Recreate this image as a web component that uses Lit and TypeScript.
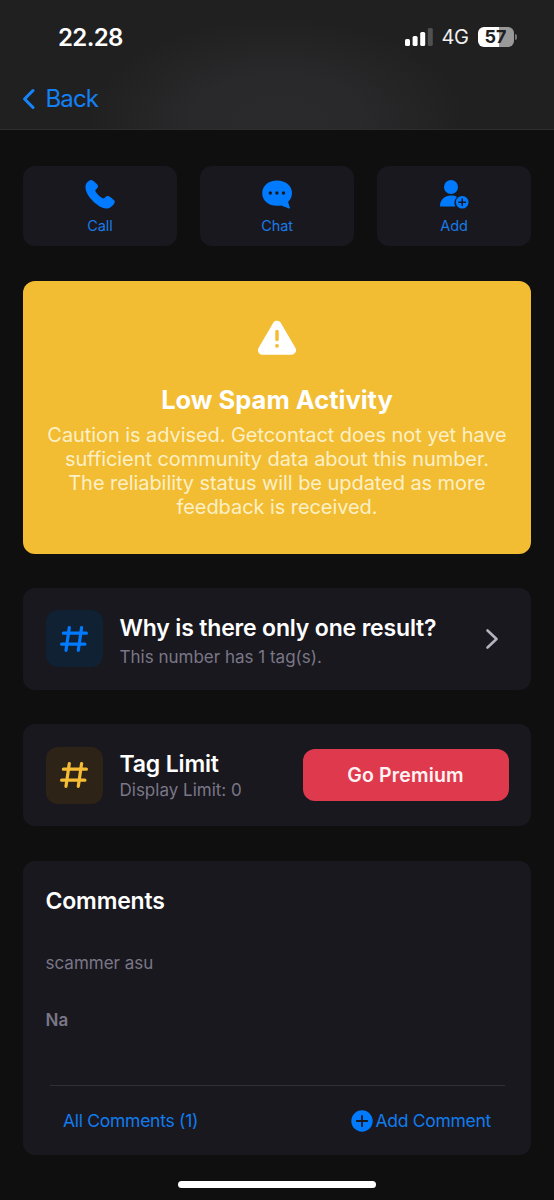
import { LitElement, html, css, svg } from "lit";
import { customElement, property } from "lit/decorators.js";

const base = css`
  * { box-sizing: border-box; }
  :host { display: block; }
  svg { display: block; flex: none; }
`;

const hash = svg`<path d="M9.300 2.500 6 25.300M21.600 2.500 18.300 25.300M3.400 8.200H26.400M1.600 19.200H24.900" fill="none" stroke="currentColor" stroke-width="3.200" stroke-linecap="round"/>`;

@customElement("status-header")
class StatusHeader extends LitElement {
  static styles = [base, css`
    :host {
      height: 130px;
      border-bottom: 1px solid #2d2d2e;
      background:
        radial-gradient(ellipse 190px 105px at 50% 95%, #2a2a2c 0%, #29292b 45%, rgba(32, 32, 32, 0) 100%),
        #202020;
    }
    .status { display: flex; align-items: center; height: 74px; padding-left: 58px; padding-right: 40.500px; }
    .time { flex: 1; font-size: 24px; font-weight: 600; letter-spacing: -0.600px; color: #fff; }
    .signal { margin-right: 8.500px; }
    .net { font-size: 20px; color: #f0f0f0; margin-right: 9px; letter-spacing: -0.400px; }
    .battery {
      position: relative; width: 36px; height: 20px; border-radius: 6px;
      background: linear-gradient(90deg, #fff 0 57%, #999 57%);
      color: #202020; font-size: 18px; font-weight: 700; line-height: 20px; text-align: center;
    }
    .nub { position: absolute; left: 37px; top: 7px; width: 2px; height: 6px; border-radius: 0 3px 3px 0; background: #777; }
    .back { display: flex; align-items: center; height: 49px; padding-left: 22px; gap: 10.500px; color: #1480f5; font-size: 24px; letter-spacing: -0.850px; }
  `];
  render() {
    return html`
      <div class="status">
        <span class="time">22.28</span>
        <svg class="signal" width="28" height="18" viewBox="0 0 28 18" fill="#fff">
          <rect x="0" y="11" width="5" height="7" rx="1.6"/>
          <rect x="7.6" y="8" width="5" height="10" rx="1.6"/>
          <rect x="15.2" y="4" width="5" height="14" rx="1.6"/>
          <rect x="22.8" y="0" width="5" height="18" rx="1.6" fill="#505050"/>
        </svg>
        <span class="net">4G</span>
        <div class="battery">57<span class="nub"></span></div>
      </div>
      <div class="back">
        <svg width="13" height="22" viewBox="0 0 13 22"><path d="M11 2.5 2.6 11l8.4 8.5" fill="none" stroke="#1685fb" stroke-width="3" stroke-linecap="round" stroke-linejoin="round"/></svg>
        <span>Back</span>
      </div>`;
  }
}

@customElement("action-tile")
class ActionTile extends LitElement {
  @property() label = "";
  @property() icon = "";
  static styles = [base, css`
    :host { height: 80px; border-radius: 12px; background: #19181e; }
    .tile { display: flex; flex-direction: column; align-items: center; padding-top: 13px; color: #007aff; }
    .label { margin-top: 8px; font-size: 14.500px; line-height: 18px; letter-spacing: -0.100px; color: #1a7be6; }
  `];
  glyph() {
    if (this.icon === "call")
      return svg`<path d="M2 3.6C3.4 1.8 5.4.5 6.6 1c1.600.4 4.600 3.200 6 5 .9 1.300.4 2.600-.9 3.700-1.400 1-1.700 1.800-1.100 2.900 1.200 2.400 3.800 4.900 6.700 6.500 1.100.6 2 .5 2.700-.5 1.100-1.500 2.300-2 3.700-1.300 1.800.9 4.100 2.600 5.400 4 1 1.100.8 2.200-.2 3.600-2 2.800-4.500 4.600-7.400 4.500C13.500 29.500.700 17 .500 8.700.400 6.600 1 4.900 2 3.600Z"/>`;
    if (this.icon === "chat")
      return svg`<path fill-rule="evenodd" d="M15 1.500C23.500 1.500 30 6.500 30 14c0 3.600-1.300 6.200-3.600 8.400-.4.4-.3.800-.1 1.300l1.600 5c.1.600-.3.900-.9.700l-7.800-3c-1.300.3-2.700.4-4.200.4C6.500 26.800.2 21.500.2 14.200.2 6.700 6.500 1.500 15 1.500ZM8.300 12.300a1.700 1.700 0 1 0 0 3.400 1.700 1.700 0 0 0 0-3.400Zm6.600 0a1.700 1.700 0 1 0 0 3.400 1.700 1.700 0 0 0 0-3.400Zm6.600 0a1.700 1.700 0 1 0 0 3.400 1.700 1.700 0 0 0 0-3.400Z"/>`;
    return svg`<circle cx="12" cy="8" r="7"/><path d="M1 27.500C1 20.700 5.500 16.600 12 16.600c2.300 0 4.300.5 6 1.400a8 8 0 0 0-1.600 9.500Z"/><circle cx="23.200" cy="23.200" r="6.300"/><path d="M23.200 19.900v6.600M19.900 23.200h6.600" stroke="#19181e" stroke-width="1.500" stroke-linecap="round"/>`;
  }
  render() {
    return html`<div class="tile">
      <svg width="30" height="30" viewBox="0 0 30 30" fill="currentColor">${this.glyph()}</svg>
      <span class="label">${this.label}</span>
    </div>`;
  }
}

@customElement("app-root")
class AppRoot extends LitElement {
  static styles = [base, css`
    :host { height: 1200px; overflow: hidden; background: #0f0f0f; font-family: Inter, "Liberation Sans", sans-serif; color: #fff; }
    .content { display: flex; flex-direction: column; padding: 35.600px 23px 0; }
    .actions { display: grid; grid-template-columns: repeat(3, 1fr); gap: 23px; }
    .warn { display: flex; flex-direction: column; align-items: center; margin-top: 35px; height: 273px; padding-top: 38px; border-radius: 12px; background: #f2bc33; text-align: center; }
    .warn-title { margin-top: 26px; font-size: 25.500px; line-height: 34px; font-weight: 700; }
    .warn-text { margin-top: 6px; font-size: 20px; line-height: 24px; letter-spacing: -0.070px; color: #fdf0c6; white-space: nowrap; }
    .card { display: flex; align-items: center; height: 102px; margin-top: 34.400px; padding: 0 22.500px; border-radius: 12px; background: #19181e; }
    .badge { display: flex; align-items: center; justify-content: center; width: 57px; height: 57px; margin-right: 17px; border-radius: 12px; }
    .blue { background: #0f2133; color: #007aff; }
    .gold { background: #2d2417; color: #f7bc35; }
    .words { flex: 1; display: flex; flex-direction: column; white-space: nowrap; }
    .title { font-size: 23px; line-height: 30px; font-weight: 600; letter-spacing: -0.170px; }
    .sub { font-size: 17px; line-height: 22px; color: #797787; }
    .wide { padding-top: 4px; gap: 3px; }
    .chev { margin-right: 10px; }
    .premium { width: 206px; height: 52px; border: 0; border-radius: 12px; background: #df394d; color: #fff2f2; font: 600 19.500px Inter, sans-serif; letter-spacing: 0.150px; }
    .comments { height: 294.500px; margin-top: 34.400px; padding: 25px 22.500px 0; border-radius: 12px; background: #19181e; }
    .comment { margin-top: 36px; }
    .author { margin-top: 35px; font-weight: 600; }
    .rule { height: 1px; margin: 54px 4px 0; background: #302f37; }
    .links { display: flex; justify-content: space-between; align-items: center; height: 70px; padding: 0 17.500px; font-size: 17.500px; letter-spacing: -0.280px; color: #127cef; }
    .add { display: flex; align-items: center; gap: 2px; }
    .home { width: 198px; height: 7px; margin: 26px auto 0; border-radius: 4px; background: #fff; }
  `];
  render() {
    return html`
      <status-header></status-header>
      <div class="content">
        <div class="actions">
          <action-tile label="Call" icon="call"></action-tile>
          <action-tile label="Chat" icon="chat"></action-tile>
          <action-tile label="Add" icon="add"></action-tile>
        </div>
        <div class="warn">
          <svg width="40" height="38" viewBox="0 0 40 38">
            <path d="M20 6.200 34.600 31.200H5.400Z" fill="#fff" stroke="#fff" stroke-width="9" stroke-linejoin="round"/>
            <path d="M20 12.500v8" stroke="#f2bc33" stroke-width="3.400" stroke-linecap="round"/>
            <circle cx="20" cy="26.800" r="1.900" fill="#f2bc33"/>
          </svg>
          <div class="warn-title">Low Spam Activity</div>
          <div class="warn-text">
            Caution is advised. Getcontact does not yet have<br />sufficient community data about this number.<br />The reliability status will be updated as more<br />feedback is received.
          </div>
        </div>
        <div class="card">
          <div class="badge blue"><svg width="28" height="28" viewBox="0 0 28 28">${hash}</svg></div>
          <div class="words wide">
            <span class="title">Why is there only one result?</span>
            <span class="sub">This number has 1 tag(s).</span>
          </div>
          <svg class="chev" width="14" height="22" viewBox="0 0 14 22"><path d="M2.500 2.500 11.500 11l-9 8.500" fill="none" stroke="#b4b2bd" stroke-width="2.600" stroke-linecap="round" stroke-linejoin="round"/></svg>
        </div>
        <div class="card">
          <div class="badge gold"><svg width="28" height="28" viewBox="0 0 28 28">${hash}</svg></div>
          <div class="words">
            <span class="title">Tag Limit</span>
            <span class="sub">Display Limit: 0</span>
          </div>
          <button class="premium">Go Premium</button>
        </div>
        <div class="comments">
          <div class="title">Comments</div>
          <div class="sub comment">scammer asu</div>
          <div class="sub author">Na</div>
          <div class="rule"></div>
          <div class="links">
            <span>All Comments (1)</span>
            <span class="add">
              <svg width="22" height="22" viewBox="0 0 22 22"><circle cx="11" cy="11" r="10.700" fill="#007aff"/><path d="M11 5.800v10.400M5.800 11h10.400" stroke="#19181e" stroke-width="1.800" stroke-linecap="round"/></svg>
              <span>Add Comment</span>
            </span>
          </div>
        </div>
        <div class="home"></div>
      </div>`;
  }
}
